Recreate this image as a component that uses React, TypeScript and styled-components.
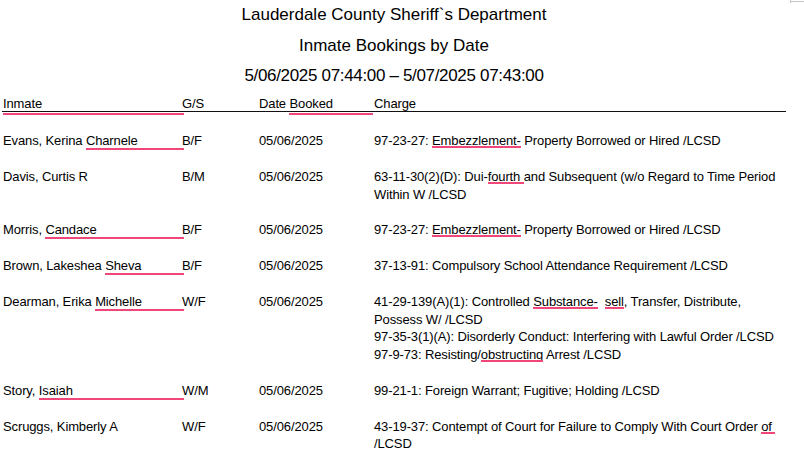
import React from 'react';
import styled, { createGlobalStyle } from 'styled-components';

const GlobalStyle = createGlobalStyle`
  html, body {
    margin: 0;
    padding: 0;
    background: #ffffff;
  }
  body {
    font-family: "Liberation Sans", Arial, sans-serif;
    color: #000000;
  }
`;

// Styled components
const Page = styled.div`
  position: relative;
  width: 804px;
  min-height: 471px;
  box-sizing: border-box;
  padding-left: 2px;
`;

const CornerMark = styled.div`
  position: absolute;
  top: 1px;
  left: 790px;
  width: 14px;
  height: 1px;
  background: #c4c4c4;

  &::before {
    content: '';
    position: absolute;
    left: 0;
    top: -1px;
    width: 1px;
    height: 3px;
    background: #c4c4c4;
  }
`;

const TitleBlock = styled.header`
  width: 784px;
  display: flex;
  flex-direction: column;
  align-items: center;
`;

const TitleLine = styled.div<{ $nudge?: number; $tight?: boolean }>`
  font-size: 17px;
  line-height: 30px;
  margin-top: ${props => props.$nudge || 0}px;
  letter-spacing: ${props => (props.$tight ? '-0.33px' : '0')};
  white-space: nowrap;
`;

const Table = styled.div`
  width: 784px;
  margin-top: 6px;
  font-size: 13px;
  letter-spacing: -0.12px;
`;

const Grid = styled.div`
  display: grid;
  grid-template-columns: 179px 77px 115px 1fr;
  align-items: start;
  padding-left: 1px;
`;

const HeadRow = styled(Grid)`
  line-height: 14px;
  border-bottom: 1px solid #111111;
`;

const Body = styled.div`
  display: flex;
  flex-direction: column;
  gap: 18px;
  padding-top: 20px;
`;

const Row = styled(Grid)`
  line-height: 17.75px;
`;

const Cell = styled.div`
  display: flex;
  align-items: flex-start;
  white-space: pre;
  min-width: 0;
`;

const ChargeCell = styled.div`
  display: flex;
  flex-direction: column;
`;

const ChargeLine = styled.div`
  white-space: pre;
`;

const Flag = styled.span<{ $fill?: boolean; $drop?: number; $ext?: number }>`
  position: relative;
  ${props => (props.$fill ? 'flex: 1;' : '')}

  &::after {
    content: '';
    position: absolute;
    left: 0;
    right: ${props => -(props.$ext || 0)}px;
    bottom: ${props => -(props.$drop || 0)}px;
    height: 2px;
    background: #f0467a;
  }
`;

// Data
type Segment = string | { flag: string };

interface Booking {
  last: string;
  flagged: string;
  gs: string;
  date: string;
  charges: Segment[][][];
}

const bookings: Booking[] = [
  {
    last: 'Evans, Kerina ',
    flagged: 'Charnele',
    gs: 'B/F',
    date: '05/06/2025',
    charges: [[['97-23-27: ', { flag: 'Embezzlement-' }, ' Property Borrowed or Hired /LCSD']]]
  },
  {
    last: 'Davis, Curtis R',
    flagged: '',
    gs: 'B/M',
    date: '05/06/2025',
    charges: [[
      ['63-11-30(2)(D): Dui-', { flag: 'fourth ' }, 'and Subsequent (w/o Regard to Time Period'],
      ['Within W /LCSD']
    ]]
  },
  {
    last: 'Morris, ',
    flagged: 'Candace',
    gs: 'B/F',
    date: '05/06/2025',
    charges: [[['97-23-27: ', { flag: 'Embezzlement-' }, ' Property Borrowed or Hired /LCSD']]]
  },
  {
    last: 'Brown, Lakeshea ',
    flagged: 'Sheva',
    gs: 'B/F',
    date: '05/06/2025',
    charges: [[['37-13-91: Compulsory School Attendance Requirement /LCSD']]]
  },
  {
    last: 'Dearman, Erika ',
    flagged: 'Michelle',
    gs: 'W/F',
    date: '05/06/2025',
    charges: [
      [
        ['41-29-139(A)(1): Controlled ', { flag: 'Substance-' }, '  ', { flag: 'sell' }, ', Transfer, Distribute,'],
        ['Possess W/ /LCSD']
      ],
      [['97-35-3(1)(A): Disorderly Conduct: Interfering with Lawful Order /LCSD']],
      [['97-9-73: Resisting/', { flag: 'obstructing' }, ' Arrest /LCSD']]
    ]
  },
  {
    last: 'Story, ',
    flagged: 'Isaiah',
    gs: 'W/M',
    date: '05/06/2025',
    charges: [[['99-21-1: Foreign Warrant; Fugitive; Holding /LCSD']]]
  },
  {
    last: 'Scruggs, Kimberly A',
    flagged: '',
    gs: 'W/F',
    date: '05/06/2025',
    charges: [[
      ['43-19-37: Contempt of Court for Failure to Comply With Court Order ', { flag: 'of ' }],
      ['/LCSD']
    ]]
  }
];

const App: React.FC = () => {
  return (
    <>
      <GlobalStyle />
      <Page>
        <CornerMark />
        <TitleBlock>
          <TitleLine>Lauderdale County Sheriff`s Department</TitleLine>
          <TitleLine $nudge={1}>Inmate Bookings by Date</TitleLine>
          <TitleLine $tight>5/06/2025 07:44:00 – 5/07/2025 07:43:00</TitleLine>
        </TitleBlock>

        <Table>
          <HeadRow>
            <Cell>
              <Flag $fill $drop={4} $ext={2}>Inmate</Flag>
            </Cell>
            <Cell>G/S</Cell>
            <Cell>
              <span>Date </span>
              <Flag $fill $drop={4} $ext={-1}>Booked</Flag>
            </Cell>
            <Cell>Charge</Cell>
          </HeadRow>

          <Body>
            {bookings.map((b, index) => (
              <Row key={index}>
                <Cell>
                  <span>{b.last}</span>
                  {b.flagged && <Flag $fill $ext={2}>{b.flagged}</Flag>}
                </Cell>
                <Cell>{b.gs}</Cell>
                <Cell>{b.date}</Cell>
                <ChargeCell>
                  {b.charges.map((charge, chargeIndex) =>
                    charge.map((line, lineIndex) => (
                      <ChargeLine key={`${chargeIndex}-${lineIndex}`}>
                        {line.map((seg, segIndex) =>
                          typeof seg === 'string' ? (
                            <React.Fragment key={segIndex}>{seg}</React.Fragment>
                          ) : (
                            <Flag key={segIndex}>{seg.flag}</Flag>
                          )
                        )}
                      </ChargeLine>
                    ))
                  )}
                </ChargeCell>
              </Row>
            ))}
          </Body>
        </Table>
      </Page>
    </>
  );
};

export default App;
